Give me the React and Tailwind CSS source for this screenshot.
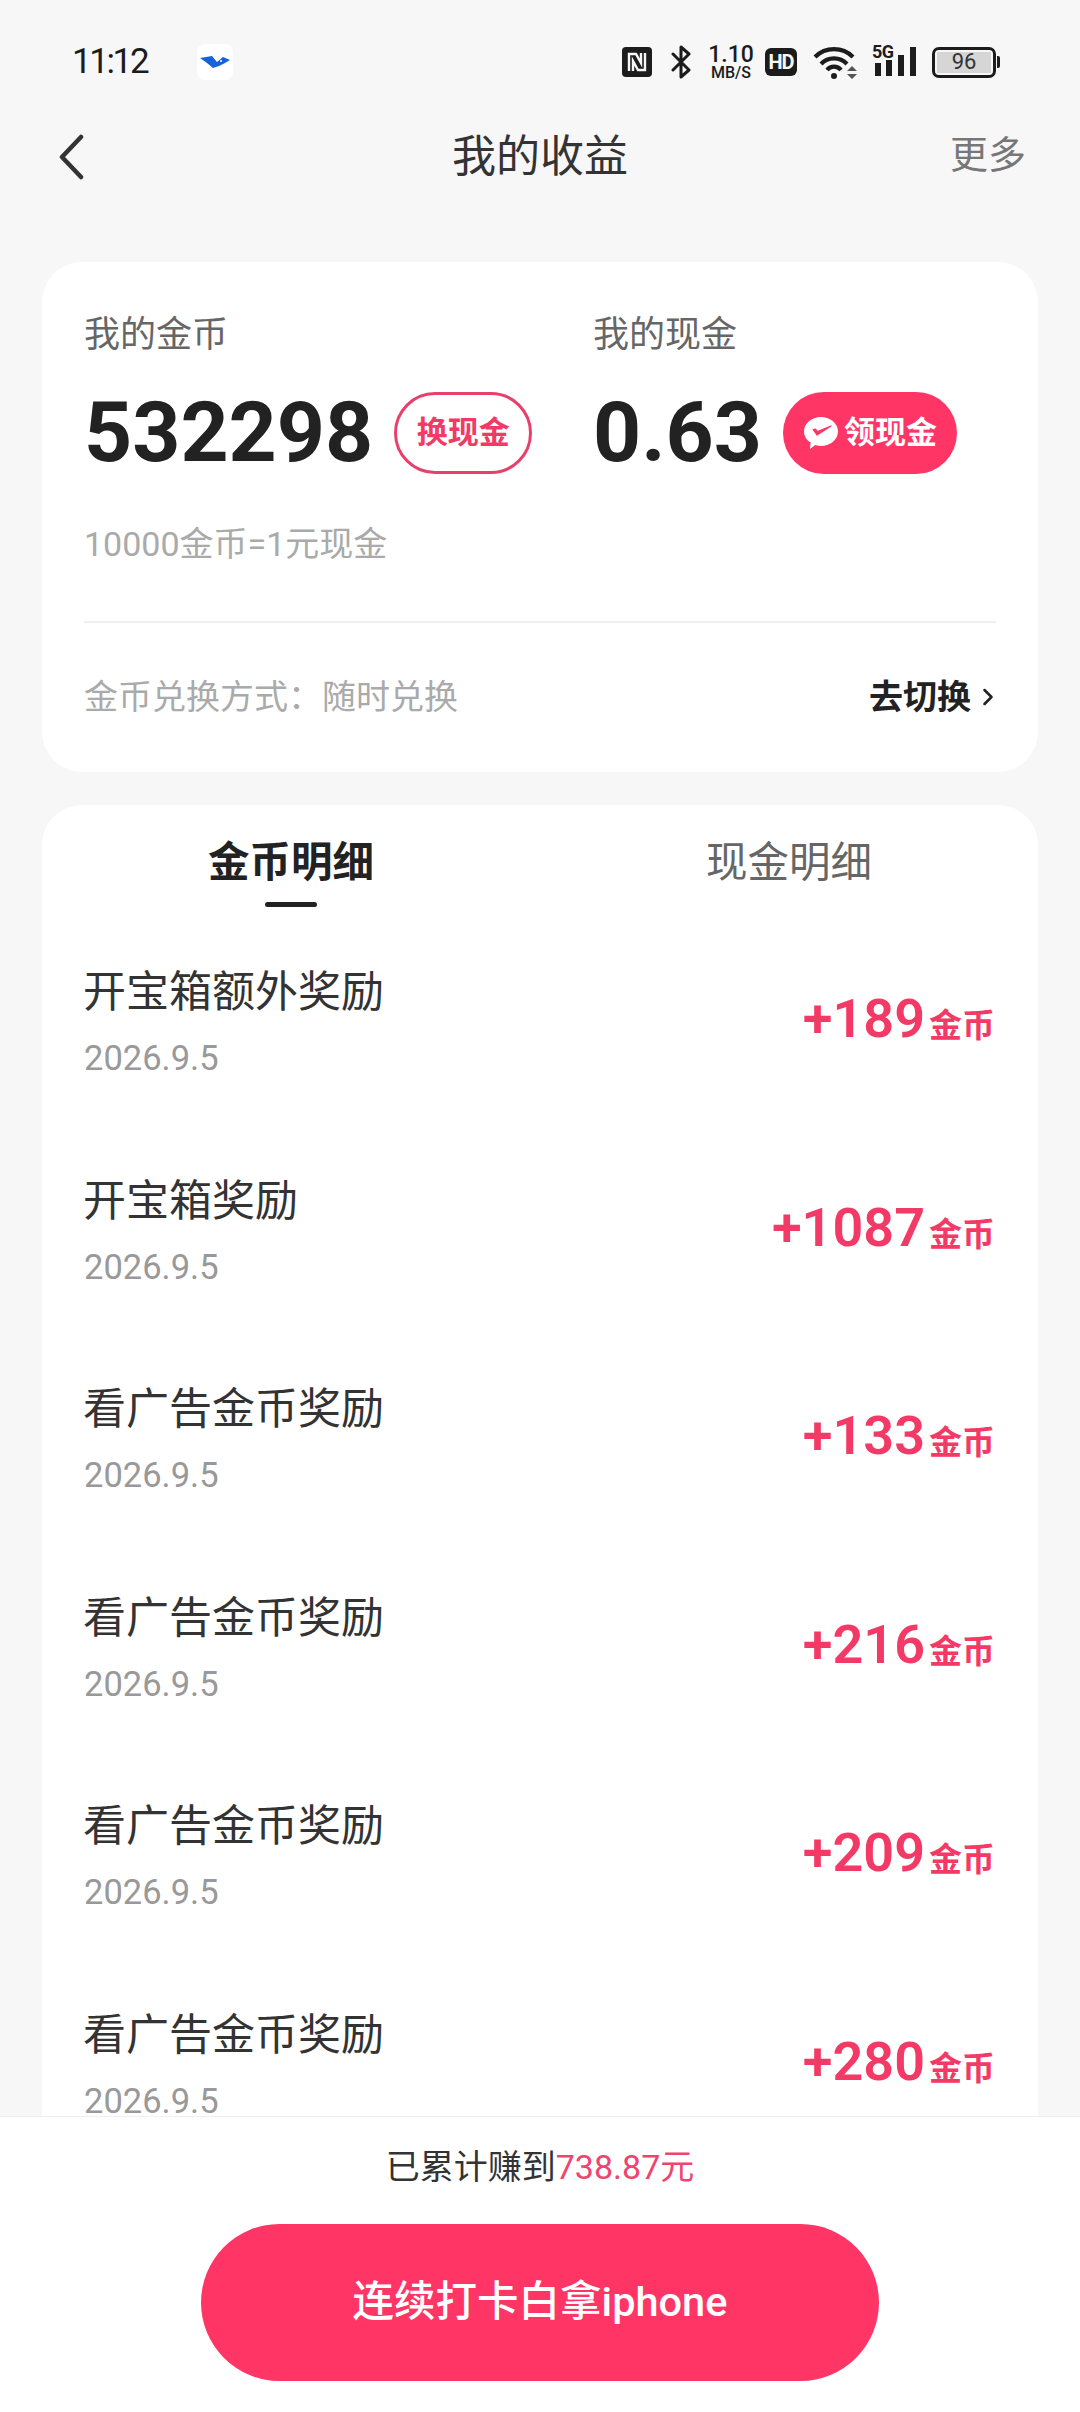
import { ChevronRight } from "lucide-react";

const font = "font-['Roboto','Noto_Sans_CJK_SC',sans-serif]";

const rows = [
  { title: "开宝箱额外奖励", amount: "+189" },
  { title: "开宝箱奖励", amount: "+1087" },
  { title: "看广告金币奖励", amount: "+133" },
  { title: "看广告金币奖励", amount: "+216" },
  { title: "看广告金币奖励", amount: "+209" },
  { title: "看广告金币奖励", amount: "+280" },
];

function StatusIcons() {
  return (
    <div className="flex items-center text-[#1c1c1c]">
      <svg width="30" height="30" viewBox="0 0 30 30">
        <rect width="30" height="30" rx="4" fill="#1c1c1c" />
        <path d="M7 24V7l7 0 5 9V6M23 6v17h-7l-5-9v10" fill="none" stroke="#f7f7f7" strokeWidth="2.4" />
      </svg>
      <svg width="21" height="34" viewBox="0 0 21 34" className="ml-[19px]">
        <path d="M2 9l16 16-8 7V2l8 7L2 25" fill="none" stroke="#1c1c1c" strokeWidth="3" strokeLinejoin="round" strokeLinecap="round" />
      </svg>
      <div className="ml-[16px] flex w-[46px] flex-col items-center font-medium">
        <span className="h-[20px] text-[23px] leading-[20px]">1.10</span>
        <span className="h-[15px] text-[16px] leading-[15px]">MB/S</span>
      </div>
      <div className="ml-[11px] flex h-[28px] w-[32px] items-center justify-center rounded-[6px] bg-[#1c1c1c] text-[20px] font-bold tracking-[-1px] text-[#f7f7f7]">
        HD
      </div>
      <svg width="46" height="36" viewBox="0 0 46 36" className="ml-[16px]">
        <path d="M2 13a27 27 0 0 1 38 0M8 20a18 18 0 0 1 26 0M14 26a9 9 0 0 1 14 0" fill="none" stroke="#1c1c1c" strokeWidth="4.2" />
        <circle cx="21" cy="32" r="3" fill="#1c1c1c" />
        <path d="M34 27l5-5 5 5zM34 30l5 5 5-5z" fill="#555" />
      </svg>
      <div className="relative ml-[13px] h-[32px] w-[46px]">
        <span className="absolute left-0 top-[-3px] text-[18px] font-bold leading-[18px] tracking-[-0.5px]">5G</span>
        <svg width="46" height="32" viewBox="0 0 46 32">
          <rect x="3" y="17" width="6" height="13" fill="#1c1c1c" />
          <rect x="14" y="14" width="6" height="16" fill="#1c1c1c" />
          <rect x="26" y="9" width="6" height="21" fill="#1c1c1c" />
          <rect x="38" y="1" width="6" height="29" fill="#1c1c1c" />
        </svg>
      </div>
      <div className="ml-[14px] flex items-center">
        <div className="flex h-[31px] w-[64px] items-center justify-center rounded-[7px] border-[3px] border-[#1c1c1c] p-[2px]">
          <div className="flex h-full w-full items-center justify-center bg-[#d6d6d6] text-[22px] leading-none text-[#333]">96</div>
        </div>
        <div className="ml-[1px] h-[12px] w-[3px] rounded-r-[2px] bg-[#1c1c1c]" />
      </div>
    </div>
  );
}

function Row({ title, amount }) {
  return (
    <div className="flex h-[208.6px] shrink-0 items-start justify-between pl-[41px] pr-[43px]">
      <div className="pt-[32px]">
        <div className="text-[43px] leading-[60px] text-[#333]">{title}</div>
        <div className="ml-[1px] mt-[14px] text-[34.5px] leading-[44px] text-[#999]">2026.9.5</div>
      </div>
      <div className="mt-[57px] flex items-baseline text-[#f33a66]">
        <span className="text-[54px] font-semibold leading-[64px]">{amount}</span>
        <span className="ml-[4px] text-[33px] font-bold">金币</span>
      </div>
    </div>
  );
}

export default function App() {
  return (
    <div className={`flex h-[2412px] w-[1080px] flex-col overflow-hidden bg-[#f7f7f7] ${font}`}>
      {/* status bar */}
      <div className="flex h-[124px] shrink-0 items-start justify-between pl-[72px] pr-[80px] pt-[42px]">
        <div className="flex items-center">
          <span className="text-[35px] leading-[40px] tracking-[-2.4px] text-[#1c1c1c]">11:12</span>
          <div className="ml-[50px] flex h-[36px] w-[36px] items-center justify-center rounded-[8px] bg-white">
            <svg width="30" height="14" viewBox="0 0 30 14">
              <path d="M0 3l12-2 5 6 6-5 7 3-5 3-6 3-6 2-6-5z" fill="#1463d8" />
              <circle cx="21" cy="6" r="1" fill="#fff" />
            </svg>
          </div>
        </div>
        <div className="mt-[2px]">
          <StatusIcons />
        </div>
      </div>

      {/* nav */}
      <div className="relative flex h-[66px] shrink-0 items-center justify-center">
        <svg width="28" height="46" viewBox="0 0 28 46" className="absolute left-[57px] top-[10px]">
          <path d="M24 3L5 23l19 20" fill="none" stroke="#333" strokeWidth="4.500" strokeLinecap="round" strokeLinejoin="round" />
        </svg>
        <span className="text-[44px] text-[#333]">我的收益</span>
        <span className="absolute right-[54px] top-[6px] text-[38px] leading-[50px] text-[#777]">更多</span>
      </div>

      {/* balance card */}
      <div className="mx-[42px] mt-[72px] h-[510px] shrink-0 rounded-[40px] bg-white px-[42px]">
        <div className="flex pt-[50px]">
          <div className="w-[509px]">
            <div className="text-[36px] leading-[46px] text-[#666]">我的金币</div>
            <div className="mt-[34px] flex h-[82px] items-center">
              <span className="text-[84px] font-bold leading-none text-[#222]">532298</span>
              <span className="ml-[21px] flex h-[82px] w-[138px] items-center justify-center rounded-full border-[3px] border-[#e8406b] text-[31px] font-bold text-[#f33a66]">
                换现金
              </span>
            </div>
          </div>
          <div>
            <div className="text-[36px] leading-[46px] text-[#666]">我的现金</div>
            <div className="mt-[34px] flex h-[82px] items-center">
              <span className="text-[84px] font-bold leading-none text-[#222]">0.63</span>
              <span className="ml-[21px] flex h-[82px] w-[174px] items-center justify-center rounded-full bg-[#ff3566] text-[31px] font-bold text-white">
                <svg width="36" height="34" viewBox="0 0 36 34" className="mr-[5px]">
                  <path d="M18 1c9.400 0 17 6.500 17 14.500S27.400 30 18 30c-2 0-4-.3-5.800-.9L7 33l.6-6.400C3.500 24 1 20 1 15.500 1 7.500 8.600 1 18 1z" fill="#fff" />
                  <path d="M10 13.500l4 5.500 14-9-13.500 5.500-2-2.500z" fill="#ff3566" stroke="#ff3566" strokeWidth="1.200" strokeLinejoin="round" />
                </svg>
                领现金
              </span>
            </div>
          </div>
        </div>
        <div className="mt-[48px] text-[34px] leading-[44px] text-[#aaa]">10000金币=1元现金</div>
        <div className="mt-[55px] h-[2px] bg-[#efefef]" />
        <div className="mt-[50px] flex items-center justify-between">
          <span className="text-[34px] leading-[48px] text-[#aaa]">金币兑换方式：随时兑换</span>
          <span className="flex items-center text-[34px] font-bold leading-[48px] text-[#222]">
            去切换
            <ChevronRight className="ml-[3px] -mr-[6px]" size={28} strokeWidth={2.2} />
          </span>
        </div>
      </div>

      {/* detail list */}
      <div className="mx-[42px] mt-[33px] flex min-h-0 flex-1 flex-col overflow-hidden rounded-t-[40px] bg-white">
        <div className="flex h-[125px] shrink-0">
          <div className="relative flex-1 pt-[28px] text-center">
            <span className="text-[41.500px] font-bold leading-[60px] text-[#222]">金币明细</span>
            <div className="absolute left-[223px] top-[97px] h-[5px] w-[52px] rounded-full bg-[#222]" />
          </div>
          <div className="flex-1 pt-[28px] text-center">
            <span className="text-[41.500px] leading-[60px] text-[#666]">现金明细</span>
          </div>
        </div>
        {rows.map((r, i) => (
          <Row key={i} title={r.title} amount={r.amount} />
        ))}
      </div>

      {/* bottom bar */}
      <div className="flex h-[296px] shrink-0 flex-col items-center border-t border-[#f0f0f0] bg-white">
        <div className="mt-[27px] text-[34px] leading-[46px] text-[#333]">
          已累计赚到<span className="text-[#f0436f]">738.87元</span>
        </div>
        <button className="mt-[34px] flex h-[157px] w-[678px] items-center justify-center rounded-full bg-[#ff3566] text-[41.500px] font-medium text-white">
          连续打卡白拿iphone
        </button>
      </div>
    </div>
  );
}
